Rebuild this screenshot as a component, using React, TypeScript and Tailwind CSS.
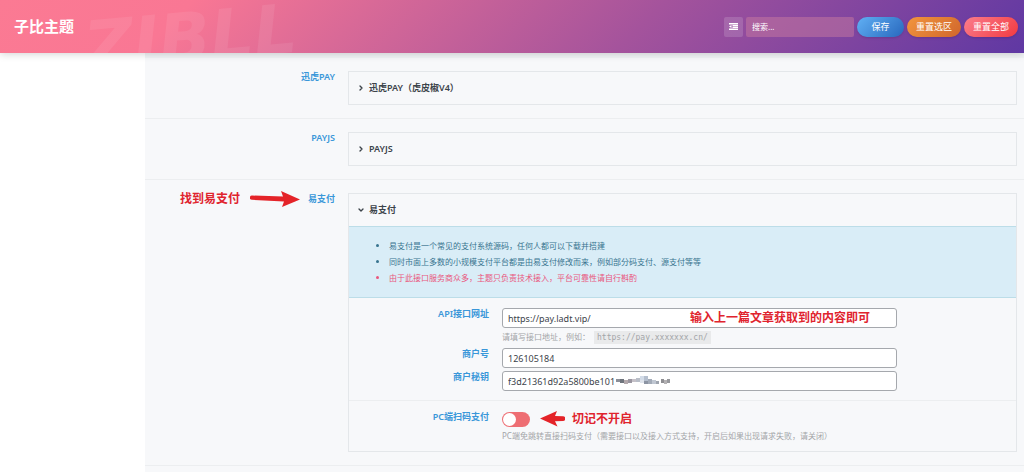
import React from 'react'
import { ChevronDown, ChevronRight } from 'lucide-react'

const notices = [
  { text: '易支付是一个常见的支付系统源码，任何人都可以下载并搭建', warn: false },
  { text: '同时市面上多数的小规模支付平台都是由易支付修改而来，例如部分码支付、源支付等等', warn: false },
  { text: '由于此接口服务商众多，主题只负责技术接入，平台可靠性请自行斟酌', warn: true }
]

const mosaic = [
  [0, 3, 4, 3, '#8b8f98'], [4, 3, 4, 4, '#6f747c'], [8, 4, 4, 4, '#b3a9ac'], [12, 3, 4, 4, '#9a96a0'],
  [16, 3, 4, 3, '#c5c1c8'], [20, 2, 4, 4, '#b9bec8'], [24, 0, 4, 4, '#d3dce8'], [28, 0, 4, 5, '#b5bfce'],
  [28, 5, 4, 3, '#8c94a3'], [32, 3, 4, 5, '#a3abb8'], [36, 4, 4, 4, '#c0c7d2'], [24, 4, 4, 3, '#dfe4ec'],
  [40, 5, 3, 3, '#9fa5af'], [45, 3, 3, 4, '#8e8e92'], [48, 4, 3, 4, '#b4b2b4'], [51, 3, 3, 4, '#97989c']
] as const

type RowProps = {
  label: string
  note?: React.ReactNode
  children: React.ReactNode
}

const Row: React.FC<RowProps> = ({ label, note, children }) => (
  <section className="relative flex gap-[13px] border-b border-[#eceef0] pt-[13px] pr-[7px] pb-[13px]">
    {note}
    <h2 className="w-[190px] shrink-0 text-right text-[9px] leading-3 font-semibold text-[#3a97d9]">{label}</h2>
    <div className="min-w-0 flex-1">{children}</div>
  </section>
)

type PanelProps = {
  title: string
  open?: boolean
  children?: React.ReactNode
}

const Panel: React.FC<PanelProps> = ({ title, open, children }) => {
  const Icon = open ? ChevronDown : ChevronRight
  return (
    <div className="border border-[#e4e7ea]">
      <button
        type="button"
        aria-expanded={!!open}
        className="flex h-8 w-full items-center gap-1 px-2 text-left text-[9px] font-semibold text-[#3c434a]"
      >
        <Icon className="size-2" strokeWidth={4} />
        {title}
      </button>
      {children}
    </div>
  )
}

const labelClass = 'w-[140px] shrink-0 text-right text-[9px] leading-3 font-semibold text-[#3a97d9]'
const inputClass =
  'block h-5 w-full rounded-[3px] border border-[#a5a8ad] bg-white px-[5px] text-[9px] text-[#3c434a] outline-none'
const helpClass = 'mt-[2px] text-[8px] leading-[14px] text-[#a3a5a8]'
const noteClass = 'text-[12px] leading-4 font-bold whitespace-nowrap text-[#e0242e]'

const App: React.FC = () => {
  return (
    <div className="flex min-h-screen flex-col bg-white font-['Noto_Sans','Noto_Sans_CJK_SC',sans-serif]">
      {/* 顶部栏 */}
      <header className="relative z-10 flex h-[53px] items-center justify-between bg-linear-[135deg,#fb7a93_0%,#f97794_18%,#a4539c_62%,#5f38a3_100%] pr-[6px] pl-[14px] shadow-[0_1px_8px_rgba(0,0,0,0.18)]">
        <div className="pointer-events-none absolute inset-0 overflow-hidden" aria-hidden="true">
          <span className="absolute top-1 left-[84px] -rotate-5 font-['DejaVu_Sans'] text-[68px] leading-[68px] font-bold text-white/8 italic">
            ZIBLL
          </span>
        </div>
        <h1 className="relative text-[15px] font-bold text-white">子比主题</h1>
        <div className="relative flex items-center gap-[3px] text-[9px] text-white">
          <button
            type="button"
            aria-label="展开菜单"
            className="flex h-5 w-[19px] items-center justify-center rounded-[2px] bg-white/15"
          >
            <svg className="h-[7px] w-[9px]" viewBox="0 0 18 14" fill="currentColor">
              <path d="M0 0h18v3H0zM7 4h11v2.500H7zM7 7.500h11V10H7zM0 11h18v3H0zM0 7l5-3v6z" />
            </svg>
          </button>
          <input
            type="text"
            aria-label="搜索"
            placeholder="搜索..."
            className="h-5 w-[108px] rounded-[2px] bg-[#c77a9f]/50 px-1.5 text-[8px] outline-none placeholder:text-white"
          />
          <button type="button" className="h-5 w-[47px] rounded-full bg-linear-[135deg,#60b0f4,#2867bd] shadow-sm">
            保存
          </button>
          <button type="button" className="h-5 w-[54px] rounded-full bg-linear-[135deg,#f2953d,#d0662c] shadow-sm">
            重置选区
          </button>
          <button type="button" className="h-5 w-[54px] rounded-full bg-linear-[135deg,#fb7d8c,#f23a40] shadow-sm">
            重置全部
          </button>
        </div>
      </header>

      {/* 支付设置 */}
      <main className="ml-[145px] flex-1 border-t-[5px] border-[#f1f4f6] bg-[#f7f8fa]">
        <Row label="迅虎PAY">
          <Panel title="迅虎PAY（虎皮椒V4）" />
        </Row>
        <Row label="PAYJS">
          <Panel title="PAYJS" />
        </Row>
        <Row
          label="易支付"
          note={
            <div className="absolute top-[11px] left-[35px] flex items-center gap-[10px]">
              <span className={noteClass}>找到易支付</span>
              <svg className="h-4 w-[50px]" viewBox="0 0 50 16" fill="#e42328">
                <path d="M2 4.500 33 5.500 31 0 50 8.500 32 16 34 10.500 2 8.800A2.150 2.150 0 0 1 2 4.500Z" />
              </svg>
            </div>
          }
        >
          <Panel title="易支付" open>
            <ul className="list-disc border-y border-[#bcdde8] bg-[#d9edf7] py-[11px] pl-10 text-[8px] leading-4 text-[#38748f]">
              {notices.map((item) => (
                <li key={item.text} className={item.warn ? 'text-[#e9567d]' : undefined}>
                  {item.text}
                </li>
              ))}
            </ul>

            <div className="space-y-[3px] pt-[10px] pb-[9px]">
              <div className="flex gap-[13px]">
                <label htmlFor="api" className={labelClass}>
                  API接口网址
                </label>
                <div className="min-w-0 flex-1">
                  <div className="relative max-w-[395px]">
                    <input id="api" type="text" defaultValue="https://pay.ladt.vip/" className={inputClass} />
                    <span className={`absolute top-[2px] right-[27px] ${noteClass}`}>
                      输入上一篇文章获取到的内容即可
                    </span>
                  </div>
                  <p className={helpClass}>
                    请填写接口地址，例如：
                    <code className="ml-1 bg-[#e9eaeb] px-[3px] py-[2px] font-['DejaVu_Sans_Mono',monospace] text-[8px]">
                      https://pay.xxxxxxx.cn/
                    </code>
                  </p>
                </div>
              </div>
              <div className="flex gap-[13px]">
                <label htmlFor="pid" className={labelClass}>
                  商户号
                </label>
                <div className="min-w-0 flex-1">
                  <input id="pid" type="text" defaultValue="126105184" className={`max-w-[395px] ${inputClass}`} />
                </div>
              </div>
              <div className="flex gap-[13px]">
                <label htmlFor="secret" className={labelClass}>
                  商户秘钥
                </label>
                <div className="relative min-w-0 flex-1">
                  <input
                    id="secret"
                    type="text"
                    defaultValue="f3d21361d92a5800be101"
                    className={`max-w-[395px] ${inputClass}`}
                  />
                  <svg className="absolute top-[5px] left-[114px] h-[9px] w-14" viewBox="0 0 56 9">
                    {mosaic.map(([x, y, w, h, fill], index) => (
                      <rect key={index} x={x} y={y} width={w} height={h} fill={fill} />
                    ))}
                  </svg>
                </div>
              </div>
            </div>

            <div className="flex gap-[13px] border-t border-[#eceef0] pt-[10px] pb-2">
              <label htmlFor="scan" className={labelClass}>
                PC端扫码支付
              </label>
              <div className="min-w-0 flex-1">
                <div className="flex items-center">
                  <input
                    id="scan"
                    type="checkbox"
                    role="switch"
                    className="h-[15px] w-7 appearance-none rounded-full bg-[#ee6e73] p-px before:block before:size-[13px] before:rounded-full before:bg-white checked:bg-[#5cb85c] checked:before:ml-auto"
                  />
                  <svg className="ml-[10px] h-4 w-[25px]" viewBox="0 0 25 16" fill="#e42328">
                    <path d="M0 7.500 17 0 15 5 23 5.300A2.300 2.300 0 0 1 23 9.900L15 10.200 17.500 15.500Z" />
                  </svg>
                  <span className={`ml-[7px] ${noteClass}`}>切记不开启</span>
                </div>
                <p className={helpClass}>
                  PC端免跳转直接扫码支付（需要接口以及接入方式支持，开启后如果出现请求失败，请关闭）
                </p>
              </div>
            </div>
          </Panel>
        </Row>
      </main>
    </div>
  )
}

export default App
